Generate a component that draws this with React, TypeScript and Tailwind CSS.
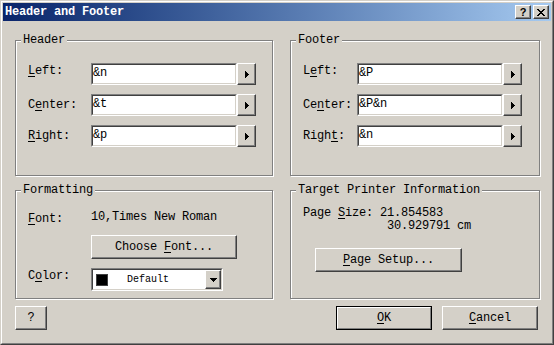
import type { ReactNode } from 'react';

// Win2k-style "Header and Footer" dialog

function Raised({ className = '', children }: { className?: string; children?: ReactNode }) {
  return (
    <div
      className={`flex items-center justify-center bg-[#d4d0c8] border border-t-white border-l-white border-r-[#404040] border-b-[#404040] shadow-[inset_-1px_-1px_0_#808080] ${className}`}
    >
      {children}
    </div>
  );
}

function Sunken({ className = '', children }: { className?: string; children?: ReactNode }) {
  return (
    <div className={`border border-t-[#808080] border-l-[#808080] border-r-white border-b-white ${className}`}>
      <div className="h-full flex items-center bg-white border border-t-[#404040] border-l-[#404040] border-r-[#d4d0c8] border-b-[#d4d0c8]">
        {children}
      </div>
    </div>
  );
}

function Group({ title, className = '', children }: { title: string; className?: string; children?: ReactNode }) {
  return (
    <div className={`flex flex-col border border-[#808080] shadow-[1px_1px_0_#fff,inset_1px_1px_0_#fff] ${className}`}>
      <span className="self-start ml-[5px] -mt-[8px] -mb-[6px] h-[14px] px-[2px] bg-[#d4d0c8] whitespace-pre">
        {title}
      </span>
      {children}
    </div>
  );
}

const K = ({ children }: { children: ReactNode }) => <u className="underline-offset-[2px]">{children}</u>;

function RightTri() {
  return (
    <svg width="4" height="7" viewBox="0 0 4 7" shapeRendering="crispEdges">
      <path d="M0 0h1v7h-1zM1 1h1v5h-1zM2 2h1v3h-1zM3 3h1v1h-1z" fill="#000" />
    </svg>
  );
}

function DownTri() {
  return (
    <svg width="7" height="4" viewBox="0 0 7 4" shapeRendering="crispEdges">
      <path d="M0 0h7v1h-7zM1 1h5v1h-5zM2 2h3v1h-3zM3 3h1v1h-1z" fill="#000" />
    </svg>
  );
}

function CloseGlyph() {
  return (
    <svg width="8" height="7" viewBox="0 0 8 7" shapeRendering="crispEdges">
      <path
        d="M0 0h2v1h-2zM6 0h2v1h-2zM1 1h2v1h-2zM5 1h2v1h-2zM2 2h4v1h-4zM3 3h2v1h-2zM2 4h4v1h-4zM1 5h2v1h-2zM5 5h2v1h-2zM0 6h2v1h-2zM6 6h2v1h-2z"
        fill="#000"
      />
    </svg>
  );
}

function FieldRow({ label, value, labelW, up }: { label: ReactNode; value: string; labelW: string; up?: boolean }) {
  return (
    <div className="flex items-center h-[22px]">
      <span className={`${labelW} ${up ? 'mb-[6px]' : ''}`}>{label}</span>
      <Sunken className="w-[146px] h-full">
        <span className="leading-[18px] pb-[2px]">{value}</span>
      </Sunken>
      <Raised className="w-[19px] h-full">
        <RightTri />
      </Raised>
    </div>
  );
}

export default function App() {
  return (
    <div className="w-[554px] h-[345px] bg-[#d4d0c8] border border-t-[#d4d0c8] border-l-[#d4d0c8] border-r-[#404040] border-b-[#404040] font-['Liberation_Mono',monospace] text-[12px] leading-[14px] tracking-[-0.2px] text-black">
      <div className="h-full flex flex-col p-[1px] border border-t-white border-l-white border-r-[#808080] border-b-[#808080]">
        {/* Title bar */}
        <div className="h-[18px] shrink-0 flex items-center pl-[2px] pr-[2px] bg-linear-to-r from-[#0a246a] to-[#a6caf0]">
          <span className="font-bold text-white">Header and Footer</span>
          <div className="ml-auto flex gap-[2px]">
            <Raised className="w-[16px] h-[14px]">
              <span className="font-['Liberation_Sans',sans-serif] font-bold text-[11px] leading-[11px]">?</span>
            </Raised>
            <Raised className="w-[16px] h-[14px]">
              <CloseGlyph />
            </Raised>
          </div>
        </div>

        {/* Body */}
        <div className="flex-1 flex flex-col pl-[12px] pt-[19px]">
          <div className="flex gap-[17px]">
            <Group title="Header" className="w-[258px] h-[136px]">
              <div className="flex flex-col gap-[9px] pt-[22px] pl-[12px]">
                <FieldRow labelW="w-[63px]" up label={<><K>L</K>eft:</>} value="&n" />
                <FieldRow labelW="w-[63px]" label={<>C<K>e</K>nter:</>} value="&t" />
                <FieldRow labelW="w-[63px]" label={<><K>R</K>ight:</>} value="&p" />
              </div>
            </Group>
            <Group title="Footer" className="w-[250px] h-[136px]">
              <div className="flex flex-col gap-[9px] pt-[22px] pl-[12px]">
                <FieldRow labelW="w-[54px]" up label={<>L<K>e</K>ft:</>} value="&P" />
                <FieldRow labelW="w-[54px]" label={<>Ce<K>n</K>ter:</>} value="&P&n" />
                <FieldRow labelW="w-[54px]" label={<>Righ<K>t</K>:</>} value="&n" />
              </div>
            </Group>
          </div>

          <div className="flex gap-[17px] mt-[14px]">
            <Group title="Formatting" className="w-[258px] h-[109px]">
              <div className="flex flex-col pt-[19px] pl-[12px]">
                <div className="flex">
                  <span className="w-[63px] mt-[2px]">
                    <K>F</K>ont:
                  </span>
                  <span>10,Times New Roman</span>
                </div>
                <Raised className="mt-[9px] ml-[63px] w-[146px] h-[24px]">
                  <span>
                    Choose <K>F</K>ont...
                  </span>
                </Raised>
                <div className="flex mt-[9px]">
                  <span className="w-[63px] mt-[1px]">
                    C<K>o</K>lor:
                  </span>
                  <Sunken className="w-[132px] h-[23px]">
                    <span className="ml-[3px] w-[12px] h-[12px] bg-black border border-[#404040]" />
                    <span className="ml-[19px] text-[10px] tracking-[0px]">Default</span>
                    <Raised className="ml-auto w-[16px] h-full">
                      <DownTri />
                    </Raised>
                  </Sunken>
                </div>
              </div>
            </Group>
            <Group title="Target Printer Information" className="w-[250px] h-[109px]">
              <div className="flex flex-col pt-[16px] pl-[12px]">
                <div className="whitespace-pre leading-[13px]">
                  {'Page '}
                  <K>S</K>
                  {'ize: 21.854583'}
                  <br />
                  {'            30.929791 cm'}
                </div>
                <Raised className="mt-[15px] ml-[12px] w-[147px] h-[24px]">
                  <span>
                    <K>P</K>age Setup...
                  </span>
                </Raised>
              </div>
            </Group>
          </div>

          {/* Bottom buttons */}
          <div className="flex mt-[7px] pr-[13px]">
            <Raised className="w-[32px] h-[24px]">?</Raised>
            <div className="ml-auto w-[96px] h-[24px] border border-black">
              <div className="h-full flex items-center justify-center bg-[#d4d0c8] border border-t-white border-l-white border-r-[#808080] border-b-[#808080]">
                <span>
                  <K>O</K>K
                </span>
              </div>
            </div>
            <Raised className="ml-[10px] w-[96px] h-[24px]">
              <span>
                <K>C</K>ancel
              </span>
            </Raised>
          </div>
        </div>
      </div>
    </div>
  );
}
